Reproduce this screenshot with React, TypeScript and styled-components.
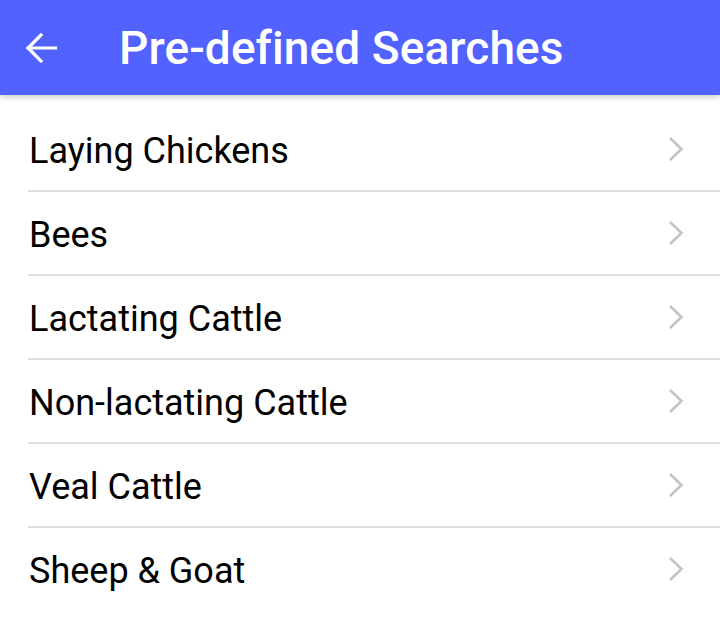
import styled, { createGlobalStyle } from "styled-components";

const GlobalStyle = createGlobalStyle`
  html, body {
    margin: 0;
    padding: 0;
    background: #ffffff;
    font-family: Roboto, "Liberation Sans", sans-serif;
  }
`;

const searches = [
  "Laying Chickens",
  "Bees",
  "Lactating Cattle",
  "Non-lactating Cattle",
  "Veal Cattle",
  "Sheep & Goat",
];

const Page = styled.div`
  width: 720px;
  height: 630px;
  overflow: hidden;
  background: #ffffff;
`;

const Toolbar = styled.header`
  position: relative;
  z-index: 1;
  height: 95px;
  display: flex;
  align-items: center;
  background: #5262ff;
  box-shadow: 0 2px 6px rgba(0, 0, 0, 0.22);
`;

const BackButton = styled.button`
  width: 84px;
  height: 95px;
  padding: 0 0 0 26px;
  margin: 0;
  border: none;
  background: transparent;
  display: flex;
  align-items: center;
  cursor: pointer;
`;

const Title = styled.h1`
  margin: 0 0 0 35px;
  color: #ffffff;
  font-size: 46px;
  font-weight: 500;
  line-height: 1;
  letter-spacing: 0.1px;
`;

const List = styled.ul`
  list-style: none;
  margin: 0;
  padding: 13px 0 0 28px;
`;

const Row = styled.li`
  height: 82px;
  display: flex;
  align-items: center;
  justify-content: space-between;
  padding-right: 36px;
  border-bottom: 2px solid #e0e0e0;
  cursor: pointer;

  &:last-child {
    border-bottom: none;
  }
`;

const Label = styled.span`
  padding: 3px 0 0 1px;
  color: #000000;
  font-size: 36px;
  font-weight: 400;
  line-height: 1;
`;

const BackArrow = () => (
  <svg width="31" height="30" viewBox="0 0 31 30" fill="none">
    <path
      d="M2 15H30M15 2L2 15L15 28"
      stroke="#ffffff"
      strokeWidth="3.2"
      strokeLinecap="square"
    />
  </svg>
);

const Chevron = () => (
  <svg width="16" height="26" viewBox="0 0 16 26" fill="none">
    <path d="M2 2L13.5 13L2 24" stroke="#c4c4c4" strokeWidth="2.6" />
  </svg>
);

export default function App() {
  return (
    <Page>
      <GlobalStyle />
      <Toolbar>
        <BackButton aria-label="Back">
          <BackArrow />
        </BackButton>
        <Title>Pre-defined Searches</Title>
      </Toolbar>
      <List>
        {searches.map((name) => (
          <Row key={name}>
            <Label>{name}</Label>
            <Chevron />
          </Row>
        ))}
      </List>
    </Page>
  );
}
